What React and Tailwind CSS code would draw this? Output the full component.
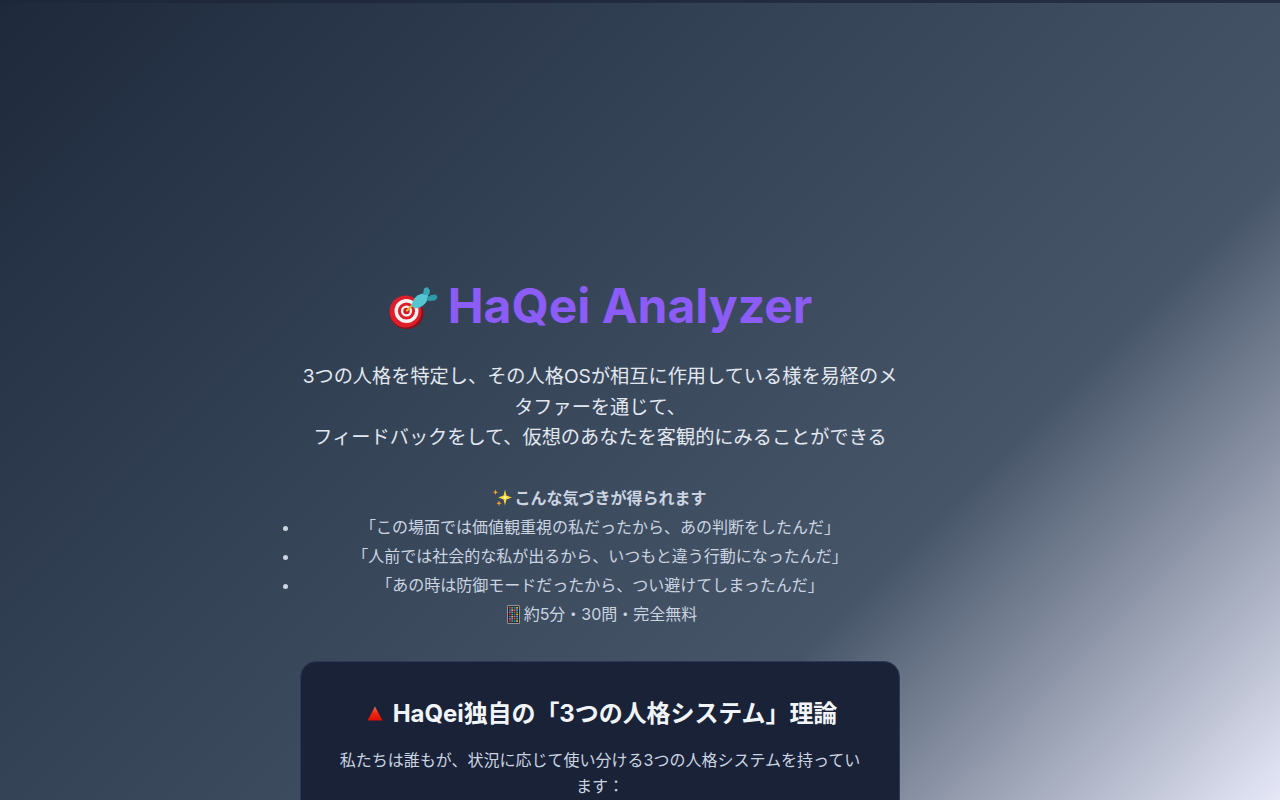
import React from "react";

const FONT = "font-['Inter','Noto_Sans_CJK_JP',sans-serif]";

function TargetIcon() {
  return (
    <svg width="50" height="42" viewBox="0 0 50 42" className="inline-block">
      <ellipse cx="18.5" cy="26" rx="17" ry="16" fill="#8e0f14" />
      <circle cx="17.5" cy="24.5" r="16" fill="#dc1f2b" />
      <circle cx="18.5" cy="24" r="12" fill="#f8f3f1" />
      <circle cx="18.5" cy="24" r="8.6" fill="#dc1f2b" />
      <circle cx="18.5" cy="24" r="5.6" fill="#f8f3f1" />
      <circle cx="18.5" cy="24" r="3.2" fill="#d11c27" />
      <path d="M19 23.5 L25.5 17" stroke="#e0b838" strokeWidth="2.2" strokeLinecap="round" />
      <path d="M23.5 18.5 C24.5 11.5 30 6.5 37.5 6 C40 6.5 40.5 9 40 11 C38.5 17 32.5 21.5 26.5 21.5 Z" fill="#55c6d2" />
      <path d="M35 8 L36 1.5 L39.5 0 L42 3.5 L41 8 Z" fill="#3aa7b5" />
      <path d="M38.5 11 L43 8 L48 7.5 L49.5 10.5 L47 13.5 L40.5 14 Z" fill="#2f9aa9" />
    </svg>
  );
}

function SparkleIcon() {
  return (
    <svg width="20" height="20" viewBox="0 0 20 20" className="inline-block">
      <path d="M12 1.5 L13.4 7.6 L19 9.5 L13.4 11.4 L12 17.5 L10.6 11.4 L5.2 9.5 L10.6 7.6 Z" fill="#fdd835" />
      <circle cx="12" cy="9.5" r="1.6" fill="#fff3b0" />
      <path d="M2.5 1.5 L3.2 3.5 L5.2 4.2 L3.2 4.9 L2.5 7 L1.8 4.9 L0 4.2 L1.8 3.5 Z" fill="#f9a825" />
      <path d="M6 12.5 L6.7 14.5 L8.7 15.2 L6.7 15.9 L6 18 L5.3 15.9 L3.4 15.2 L5.3 14.5 Z" fill="#f9a825" />
    </svg>
  );
}

function PhoneIcon() {
  const colors = ["#d33", "#3a7", "#37c", "#db3", "#c5a", "#3ab"];
  const cells = [];
  for (let r = 0; r < 7; r++) {
    for (let c = 0; c < 4; c++) {
      cells.push(
        <rect key={r + "-" + c} x={1.8 + c * 2.45} y={2 + r * 2.2} width="2" height="1.7" fill={colors[(r * 2 + c) % 6]} />
      );
    }
  }
  return (
    <svg width="13" height="19" viewBox="0 0 13 19" className="inline-block">
      <rect x="0" y="0" width="13" height="19" rx="1.5" fill="#8f959c" />
      <rect x="1" y="1.2" width="11" height="16.6" fill="#15171c" />
      {cells}
    </svg>
  );
}

function TriangleIcon() {
  return (
    <svg width="16" height="15" viewBox="0 0 16 15" className="inline-block">
      <defs>
        <linearGradient id="tri" x1="0" y1="0" x2="0" y2="1">
          <stop offset="0" stopColor="#f0725c" />
          <stop offset="0.45" stopColor="#ee2a12" />
          <stop offset="1" stopColor="#e01005" />
        </linearGradient>
      </defs>
      <path d="M8 0.5 L15.5 14.5 L0.5 14.5 Z" fill="url(#tri)" />
    </svg>
  );
}

export default function App() {
  return (
    <div className={`${FONT} relative h-[800px] overflow-hidden bg-[linear-gradient(135deg,#1e293b_0%,#334155_35%,#475569_70%,#e6e8f8_100%)]`}>
      <div className="absolute inset-x-0 top-0 h-[3px] bg-[#1e2739]/80" />
      <main className="ml-[300px] w-[600px] pt-[276px] text-center">
        <h1 className="flex h-[60px] items-center justify-center text-[48px] font-bold leading-[60px] text-[#8b5cf6]">
          <span className="mr-[10px] mt-[4px] flex"><TargetIcon /></span>
          HaQei Analyzer
        </h1>
        <p className="mt-[25px] text-[19.2px] leading-[30.6px] text-[#e2e8f0]">
          3つの人格を特定し、その人格OSが相互に作用している様を易経のメタファーを通じて、
          <br />
          フィードバックをして、仮想のあなたを客観的にみることができる
        </p>
        <div className="mt-[31px] text-[16px] leading-[29px] text-[#cbd5e1]">
          <p className="flex items-center justify-center font-bold">
            <span className="mr-[1px] flex"><SparkleIcon /></span>
            こんな気づきが得られます
          </p>
          <ul className="list-disc">
            <li>「この場面では価値観重視の私だったから、あの判断をしたんだ」</li>
            <li>「人前では社会的な私が出るから、いつもと違う行動になったんだ」</li>
            <li>「あの時は防御モードだったから、つい避けてしまったんだ」</li>
          </ul>
          <p className="flex items-center justify-center">
            <span className="ml-[4px] mr-[4px] flex"><PhoneIcon /></span>
            約5分・30問・完全無料
          </p>
        </div>
        <section className="mt-[32px] rounded-2xl border border-[#2c3857] bg-[#1a2238] px-[32px] pt-[33px] pb-8">
          <h2 className="flex items-center justify-center text-[24px] font-bold leading-[38px] tracking-[-0.07px] text-[#f1f5f9]">
            <span className="ml-[4px] mr-[10px] flex"><TriangleIcon /></span>
            HaQei独自の「3つの人格システム」理論
          </h2>
          <p className="mt-[14px] text-[16px] leading-[26px] text-[#cbd5e1]">
            私たちは誰もが、状況に応じて使い分ける3つの人格システムを持っています：
          </p>
        </section>
      </main>
    </div>
  );
}
